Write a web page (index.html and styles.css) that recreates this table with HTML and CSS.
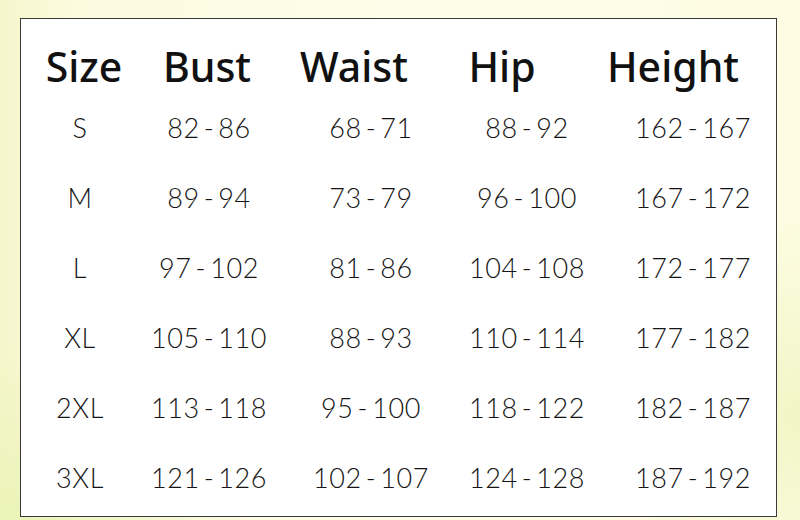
FILE: index.html
```html
<!DOCTYPE html>
<html lang="en">
<head>
<meta charset="utf-8">
<title>Size Chart</title>
<link rel="stylesheet" href="styles.css">
</head>
<body>
<div class="page">
  <div class="chart">
    <div class="head c1">Size</div>
    <div class="head c2">Bust</div>
    <div class="head c3">Waist</div>
    <div class="head c4">Hip</div>
    <div class="head c5">Height</div>

    <div class="cell c1">S</div>
    <div class="cell c2">82<span class="dash">-</span>86</div>
    <div class="cell c3">68<span class="dash">-</span>71</div>
    <div class="cell c4">88<span class="dash">-</span>92</div>
    <div class="cell c5">162<span class="dash">-</span>167</div>

    <div class="cell c1">M</div>
    <div class="cell c2">89<span class="dash">-</span>94</div>
    <div class="cell c3">73<span class="dash">-</span>79</div>
    <div class="cell c4">96<span class="dash">-</span>100</div>
    <div class="cell c5">167<span class="dash">-</span>172</div>

    <div class="cell c1">L</div>
    <div class="cell c2">97<span class="dash">-</span>102</div>
    <div class="cell c3">81<span class="dash">-</span>86</div>
    <div class="cell c4">104<span class="dash">-</span>108</div>
    <div class="cell c5">172<span class="dash">-</span>177</div>

    <div class="cell c1">XL</div>
    <div class="cell c2">105<span class="dash">-</span>110</div>
    <div class="cell c3">88<span class="dash">-</span>93</div>
    <div class="cell c4">110<span class="dash">-</span>114</div>
    <div class="cell c5">177<span class="dash">-</span>182</div>

    <div class="cell c1">2XL</div>
    <div class="cell c2">113<span class="dash">-</span>118</div>
    <div class="cell c3">95<span class="dash">-</span>100</div>
    <div class="cell c4">118<span class="dash">-</span>122</div>
    <div class="cell c5">182<span class="dash">-</span>187</div>

    <div class="cell c1">3XL</div>
    <div class="cell c2">121<span class="dash">-</span>126</div>
    <div class="cell c3">102<span class="dash">-</span>107</div>
    <div class="cell c4">124<span class="dash">-</span>128</div>
    <div class="cell c5">187<span class="dash">-</span>192</div>
  </div>
</div>
</body>
</html>
```

FILE: styles.css
```css
html, body {
  margin: 0;
  padding: 0;
}

body {
  width: 800px;
  height: 520px;
  overflow: hidden;
  background:
    radial-gradient(ellipse 260px 180px at 0% 100%, #eaf3b8 0%, rgba(234,243,184,0) 100%),
    radial-gradient(ellipse 220px 200px at 100% 80%, #f1f6c6 0%, rgba(241,246,198,0) 100%),
    linear-gradient(90deg, #f6f6cc 0%, #fcfbe0 10%, #fefde9 50%, #fdfce2 100%);
}

.page {
  padding: 18px 0 0 20px;
}

.chart {
  box-sizing: border-box;
  width: 757px;
  height: 499px;
  background: #ffffff;
  border: 1px solid #3a3a3a;
  display: grid;
  grid-template-columns: 118px 140px 184px 128px 184px;
  grid-template-rows: 70px repeat(6, 70px);
  padding-top: 4px;
  align-items: center;
  justify-items: center;
}

.head {
  align-self: end;
  font-family: "Noto Sans", "Open Sans", sans-serif;
  font-weight: 500;
  font-size: 41px;
  line-height: 54px;
  color: #111111;
}

.cell {
  font-family: Lato, "Noto Sans", sans-serif;
  font-weight: 300;
  font-size: 27px;
  line-height: 70px;
  letter-spacing: 0.6px;
  color: #141414;
}

.dash {
  margin: 0 4px;
}

.head.c1 { padding-left: 8px; }
.head.c2 { padding-right: 4px; }
.head.c3 { padding-right: 34px; }
.head.c4 { padding-right: 50px; }
.head.c5 { padding-right: 20px; }

.cell.c5 { padding-left: 20px; }
```
